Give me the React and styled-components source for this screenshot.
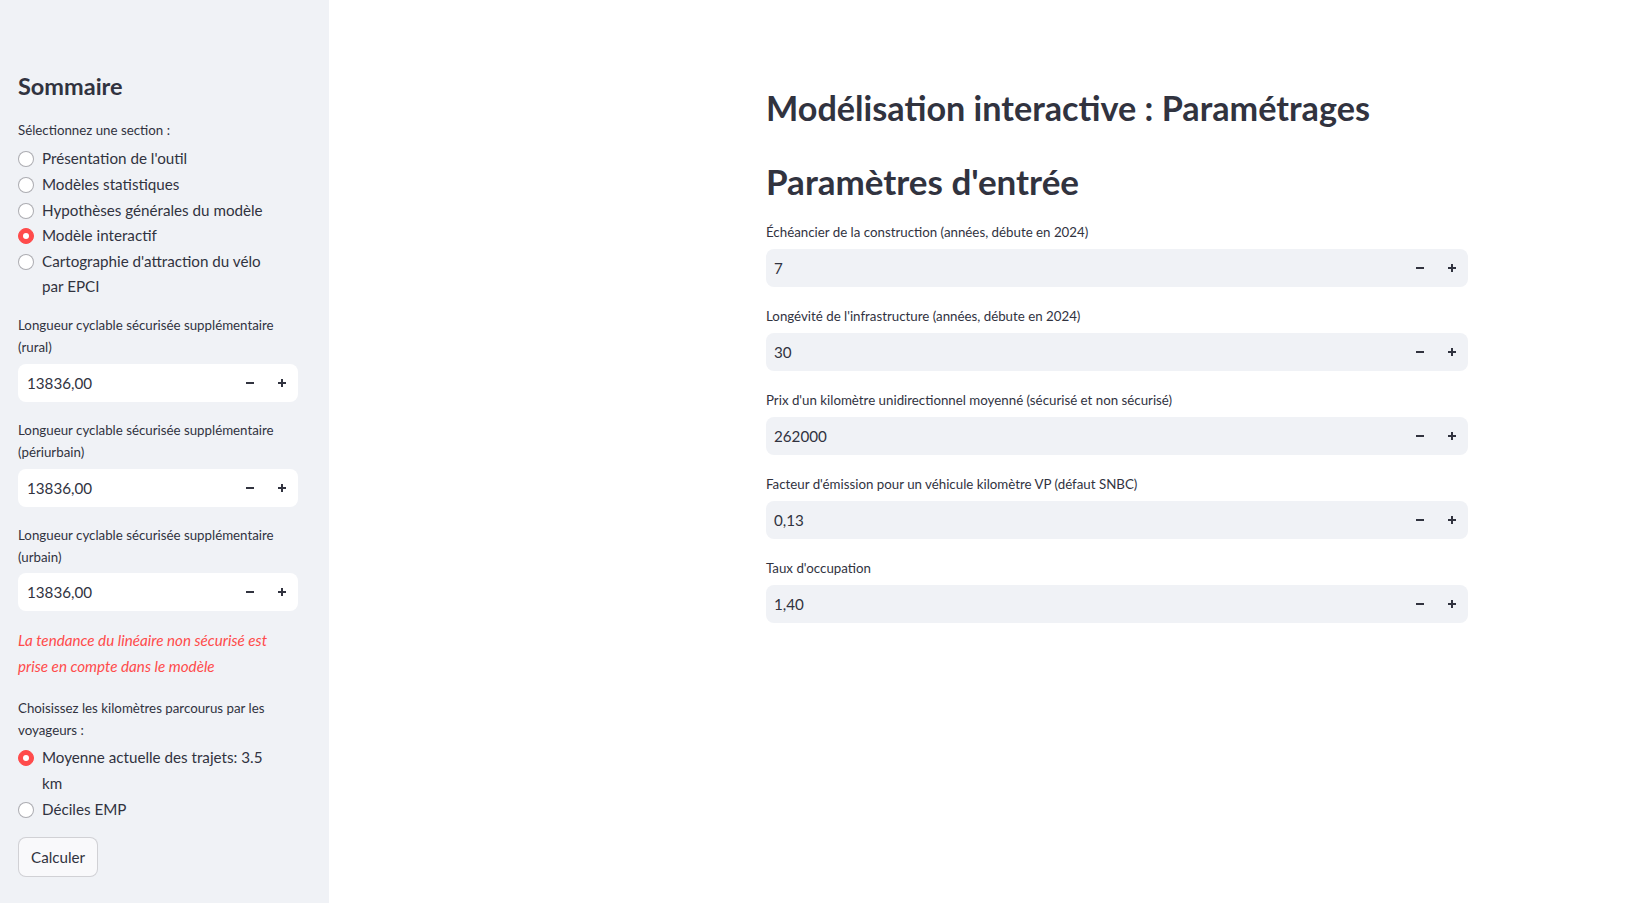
import React from 'react'
import styled, { createGlobalStyle } from 'styled-components'

const GlobalStyle = createGlobalStyle`
  html, body {
    margin: 0;
    padding: 0;
    background: #ffffff;
  }
  body {
    font-family: Lato, "Noto Sans", "Liberation Sans", sans-serif;
    color: #31333f;
    -webkit-font-smoothing: antialiased;
  }
  * {
    box-sizing: border-box;
  }
`

const Page = styled.div`
  display: flex;
  min-height: 100vh;
`

const Sidebar = styled.aside`
  width: 329px;
  flex-shrink: 0;
  background: #f0f2f6;
  padding: 72px 31px 24px 18px;
  display: flex;
  flex-direction: column;
  gap: 17px;
`

const SideTitle = styled.h2`
  margin: 0 0 1px;
  font-size: 23.5px;
  font-weight: 700;
  line-height: 29px;
  color: #31333f;
`

const Field = styled.div`
  display: flex;
  flex-direction: column;
  margin-bottom: ${({ $pull }) => ($pull ? `-${$pull}px` : 0)};
`

const Label = styled.label`
  font-size: 13.3px;
  line-height: 22.4px;
  color: #31333f;
  margin-bottom: ${({ $gap }) => $gap || 5}px;
`

const RadioList = styled.div`
  display: flex;
  flex-direction: column;
`

const RadioRow = styled.div`
  display: flex;
  align-items: flex-start;
  gap: 8px;
  font-size: 15.2px;
  line-height: 25.6px;
  color: #31333f;
  padding-right: 20px;
`

const RadioDot = styled.span`
  flex-shrink: 0;
  width: 16px;
  height: 16px;
  margin-top: 5px;
  border-radius: 50%;
  background: ${({ $on }) => ($on ? '#ff4b4b' : '#ffffff')};
  border: 1px solid ${({ $on }) => ($on ? '#ff4b4b' : 'rgba(49, 51, 63, 0.4)')};
  display: flex;
  align-items: center;
  justify-content: center;

  &::after {
    content: '';
    display: ${({ $on }) => ($on ? 'block' : 'none')};
    width: 6px;
    height: 6px;
    border-radius: 50%;
    background: #ffffff;
  }
`

const InputBox = styled.div`
  display: flex;
  align-items: center;
  height: 38px;
  border-radius: 8px;
  background: ${({ $light }) => ($light ? '#ffffff' : '#f0f2f6')};
  padding-left: ${({ $light }) => ($light ? 9 : 8)}px;
`

const Value = styled.span`
  flex: 1;
  font-size: 15.2px;
  color: #31333f;
`

const StepButton = styled.span`
  width: 32px;
  height: 38px;
  display: flex;
  align-items: center;
  justify-content: center;
  color: #31333f;
`

const Warning = styled.p`
  margin: 0;
  font-size: 15.2px;
  line-height: 25.6px;
  font-style: italic;
  color: #ff4b4b;
`

const ActionButton = styled.button`
  align-self: flex-start;
  height: 40px;
  padding: 0 12px;
  border-radius: 8px;
  border: 1px solid rgba(49, 51, 63, 0.2);
  background: #f9f9fb;
  font-family: inherit;
  font-size: 15.2px;
  color: #31333f;
  margin-top: -2px;
`

const Main = styled.main`
  flex: 1;
  padding: 86px 173px 40px 437px;
`

const Title = styled.h1`
  margin: 0 0 30px;
  font-size: 34.2px;
  font-weight: 700;
  line-height: 43px;
  color: #31333f;
`

const Header = styled.h2`
  margin: 0 0 18px;
  font-size: 35px;
  font-weight: 700;
  line-height: 44px;
  color: #31333f;
`

const FieldList = styled.div`
  display: flex;
  flex-direction: column;
  gap: 18.2px;
`

const Minus = () => (
  <svg width="10" height="10" viewBox="0 0 10 10">
    <rect x="1" y="4" width="8" height="2" fill="currentColor" />
  </svg>
)

const Plus = () => (
  <svg width="10" height="10" viewBox="0 0 10 10">
    <rect x="1" y="4" width="8" height="2" fill="currentColor" />
    <rect x="4" y="1" width="2" height="8" fill="currentColor" />
  </svg>
)

const NumberInput = ({ label, value, light }) => (
  <Field>
    <Label $gap={light ? 5 : 5.4}>{label}</Label>
    <InputBox $light={light}>
      <Value>{value}</Value>
      <StepButton>
        <Minus />
      </StepButton>
      <StepButton>
        <Plus />
      </StepButton>
    </InputBox>
  </Field>
)

const RadioGroup = ({ label, options, selected, pull, labelGap }) => (
  <Field $pull={pull}>
    <Label $gap={labelGap}>{label}</Label>
    <RadioList>
      {options.map((opt) => (
        <RadioRow key={opt}>
          <RadioDot $on={opt === selected} />
          <span>{opt}</span>
        </RadioRow>
      ))}
    </RadioList>
  </Field>
)

const sections = [
  "Présentation de l'outil",
  'Modèles statistiques',
  'Hypothèses générales du modèle',
  'Modèle interactif',
  "Cartographie d'attraction du vélo par EPCI"
]

const sideInputs = [
  { label: 'Longueur cyclable sécurisée supplémentaire (rural)', value: '13836,00' },
  { label: 'Longueur cyclable sécurisée supplémentaire (périurbain)', value: '13836,00' },
  { label: 'Longueur cyclable sécurisée supplémentaire (urbain)', value: '13836,00' }
]

const params = [
  { label: 'Échéancier de la construction (années, débute en 2024)', value: '7' },
  { label: "Longévité de l'infrastructure (années, débute en 2024)", value: '30' },
  { label: "Prix d'un kilomètre unidirectionnel moyenné (sécurisé et non sécurisé)", value: '262000' },
  { label: "Facteur d'émission pour un véhicule kilomètre VP (défaut SNBC)", value: '0,13' },
  { label: "Taux d'occupation", value: '1,40' }
]

export default function App() {
  return (
    <Page>
      <GlobalStyle />
      <Sidebar>
        <SideTitle>Sommaire</SideTitle>
        <RadioGroup
          label="Sélectionnez une section :"
          options={sections}
          selected="Modèle interactif"
          pull={3}
        />
        {sideInputs.map((item) => (
          <NumberInput key={item.label} label={item.label} value={item.value} light />
        ))}
        <Warning>La tendance du linéaire non sécurisé est prise en compte dans le modèle</Warning>
        <RadioGroup
          label="Choisissez les kilomètres parcourus par les voyageurs :"
          options={['Moyenne actuelle des trajets: 3.5 km', 'Déciles EMP']}
          selected="Moyenne actuelle des trajets: 3.5 km"
          labelGap={4}
        />
        <ActionButton>Calculer</ActionButton>
      </Sidebar>
      <Main>
        <Title>Modélisation interactive : Paramétrages</Title>
        <Header>Paramètres d'entrée</Header>
        <FieldList>
          {params.map((p) => (
            <NumberInput key={p.label} label={p.label} value={p.value} />
          ))}
        </FieldList>
      </Main>
    </Page>
  )
}
